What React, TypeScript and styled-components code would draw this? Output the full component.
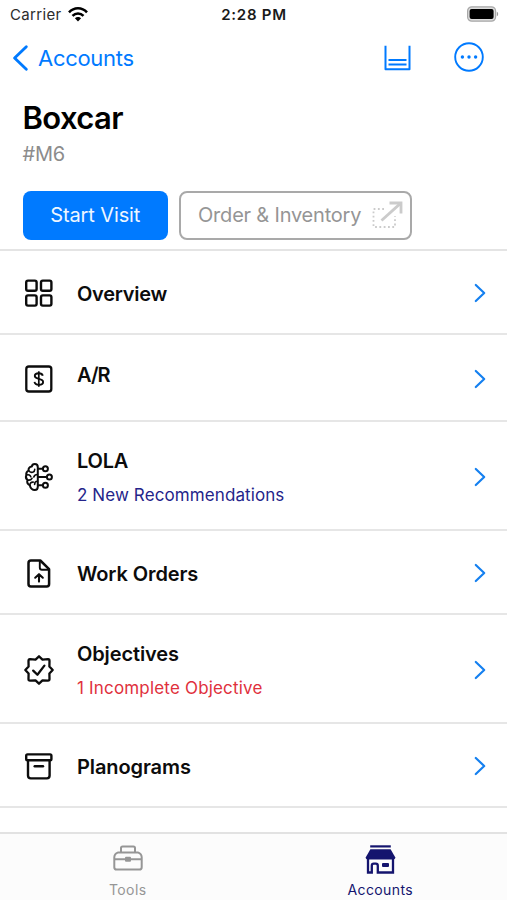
import React from "react";
import styled, { createGlobalStyle } from "styled-components";

const BLUE = "#007aff";
const NAVY = "#14146e";

const GlobalStyle = createGlobalStyle`
  * { box-sizing: border-box; }
  body { margin: 0; background: #fff; }
  svg { display: block; flex: none; overflow: visible; }
`;

const Screen = styled.div`
  width: 507px;
  height: 900px;
  display: flex;
  flex-direction: column;
  overflow: hidden;
  background: #fff;
  color: #0c0c0c;
  font-family: Inter, "Liberation Sans", sans-serif;
`;

const StatusBar = styled.div`
  height: 30px;
  flex: none;
  display: grid;
  grid-template-columns: 1fr auto 1fr;
  align-items: center;
  padding: 0 9px 0 10px;
`;

const Carrier = styled.div`
  display: flex;
  align-items: center;
  gap: 6px;
  font-size: 15px;
  line-height: 20px;
  letter-spacing: 0.35px;
  color: #2c2c2c;

  svg {
    margin-bottom: 2px;
  }
`;

const Clock = styled.div`
  font-size: 15px;
  line-height: 20px;
  font-weight: 600;
  letter-spacing: 0.75px;
  color: #1a1a1a;
`;

const BatterySlot = styled.div`
  justify-self: end;
  padding-bottom: 2px;
`;

const NavBar = styled.nav`
  height: 56px;
  flex: none;
  display: flex;
  align-items: center;
  padding: 0 23px 0 13px;
`;

const BackButton = styled.button`
  display: flex;
  align-items: center;
  gap: 10px;
  border: 0;
  padding: 0;
  background: none;
  color: ${BLUE};
  font: 400 22px/28px Inter, "Liberation Sans", sans-serif;
  letter-spacing: -0.3px;
  margin-right: auto;
`;

const NavActions = styled.div`
  display: flex;
  align-items: center;
  gap: 43px;
  padding-bottom: 2px;
  color: ${BLUE};
`;

const AccountHeader = styled.header`
  height: 165px;
  flex: none;
  padding: 12px 22px 0 22.5px;
  border-bottom: 2px solid #e4e4e4;
`;

const Title = styled.h1`
  margin: 0;
  font-size: 31px;
  line-height: 40px;
  font-weight: 600;
  letter-spacing: -0.6px;
  color: #000;
`;

const AccountId = styled.div`
  margin-top: 3px;
  font-size: 20px;
  line-height: 26px;
  letter-spacing: -0.2px;
  color: #8c8c8c;
`;

const Actions = styled.div`
  display: flex;
  gap: 11px;
  margin-top: 24px;
`;

const ActionButton = styled.button<{ $primary?: boolean }>`
  width: ${(p) => (p.$primary ? 145.5 : 232.5)}px;
  height: 48.5px;
  display: flex;
  align-items: center;
  justify-content: ${(p) => (p.$primary ? "center" : "flex-start")};
  gap: 11px;
  padding: ${(p) => (p.$primary ? "0" : "0 0 0 17px")};
  border: ${(p) => (p.$primary ? "0" : "2px solid #a9a9a9")};
  border-radius: 8px;
  background: ${(p) => (p.$primary ? BLUE : "#fff")};
  color: ${(p) => (p.$primary ? "#eef6ff" : "#959595")};
  font: 400 20px/26px Inter, "Liberation Sans", sans-serif;
  letter-spacing: ${(p) => (p.$primary ? -0.12 : -0.2)}px;
  white-space: nowrap;
`;

const List = styled.main`
  flex: 1;
  min-height: 0;
`;

const Row = styled.div<{ $height: number }>`
  height: ${(p) => p.$height}px;
  display: flex;
  align-items: center;
  padding: 2px 21px 0 23px;
  border-bottom: 2px solid #e6e6e6;
`;

const IconSlot = styled.div`
  width: 31px;
  display: flex;
  justify-content: center;
  color: #0c0c0c;
`;

const RowText = styled.div<{ $lift: number }>`
  flex: 1;
  margin-left: 23px;
  padding-top: 1px;
  padding-bottom: ${(p) => p.$lift}px;
`;

const RowTitle = styled.div<{ $tracking: number }>`
  font-size: 20px;
  line-height: 26px;
  font-weight: 600;
  letter-spacing: ${(p) => p.$tracking}px;
`;

const RowNote = styled.div<{ $color: string; $tracking: number }>`
  margin-top: 10px;
  font-size: 17px;
  line-height: 22px;
  letter-spacing: ${(p) => p.$tracking}px;
  color: ${(p) => p.$color};
`;

const TabBar = styled.footer`
  height: 68px;
  flex: none;
  display: grid;
  grid-template-columns: 1fr 1fr;
  border-top: 2px solid #e2e2e2;
  background: #fcfcfc;
`;

const Tab = styled.div<{ $active?: boolean }>`
  display: flex;
  flex-direction: column;
  align-items: center;
  justify-content: flex-end;
  padding-bottom: 1px;
  padding-left: ${(p) => (p.$active ? 0 : 2)}px;
  gap: ${(p) => (p.$active ? 7 : 10)}px;
  font-size: 14px;
  line-height: 18px;
  letter-spacing: 0.4px;
  color: ${(p) => (p.$active ? NAVY : "#969696")};
`;

const WifiIcon = () => (
  <svg width="20" height="15" viewBox="0 0 20 15" fill="none" stroke="#000" strokeWidth="2.5">
    <path d="M1 5.4C6-.1 14-.1 19 5.4" />
    <path d="M4.5 8.9C7.6 5.6 12.4 5.6 15.5 8.9" />
    <path d="M6.9 11.3C8.7 9.4 11.3 9.4 13.1 11.3L10 14.5Z" fill="#000" stroke="none" />
  </svg>
);

const BatteryIcon = () => (
  <svg width="32" height="16" viewBox="0 0 32 16">
    <rect x="1.6" y="0.8" width="28" height="14.4" rx="4.2" fill="#dcdcdc" stroke="#a8a8a8" strokeWidth="1.2" />
    <rect x="3.6" y="2.9" width="24" height="10.2" rx="2" fill="#000" />
    <path d="M30.8 5.7Q32.2 6.1 32.2 8T30.8 10.3Z" fill="#999" />
  </svg>
);

const BackIcon = () => (
  <svg width="15" height="26" viewBox="0 0 15 26" fill="none" stroke="currentColor" strokeWidth="2.9" strokeLinecap="round" strokeLinejoin="round">
    <path d="M13.3 1.8L1.6 13L13.3 24.2" />
  </svg>
);

const TrayIcon = () => (
  <svg width="27" height="26" viewBox="0 0 27 26" fill="none" stroke="currentColor" strokeWidth="2" strokeLinejoin="round">
    <path d="M1.5 1.8V25.3H25.5V1.8" />
    <path d="M4.5 16.1H22.5M4.5 20.6H22.5" />
  </svg>
);

const MoreIcon = () => (
  <svg width="30" height="30" viewBox="0 0 30 30" fill="none" stroke="currentColor" strokeWidth="1.9">
    <circle cx="15" cy="15" r="13.8" />
    <g fill="currentColor" stroke="none">
      <circle cx="8.4" cy="15" r="1.7" />
      <circle cx="15" cy="15" r="1.7" />
      <circle cx="21.6" cy="15" r="1.7" />
    </g>
  </svg>
);

const ExpandIcon = () => (
  <svg width="32" height="28" viewBox="0 0 32 28" fill="none" stroke="#cbcbcb">
    <path d="M12 8H1.5V26H23V15" strokeWidth="1.8" strokeDasharray="1.8 2.5" />
    <path d="M9.5 19.5L28.5 2.4" strokeWidth="2.8" />
    <path d="M17.5 2H29V12.5" strokeWidth="2.8" />
  </svg>
);

const ChevronIcon = () => (
  <svg width="11" height="18" viewBox="0 0 11 18" fill="none" stroke="#1580f0" strokeWidth="2.2" strokeLinecap="round" strokeLinejoin="round">
    <path d="M0.8 1L9.2 9L0.8 17" />
  </svg>
);

const OverviewIcon = () => (
  <svg width="28" height="28" viewBox="0 0 28 28" fill="none" stroke="currentColor" strokeWidth="2.4">
    <rect x="1.2" y="1.6" width="10.4" height="10.2" rx="1.8" />
    <rect x="16" y="1.6" width="10.4" height="10.2" rx="1.8" />
    <rect x="1.2" y="16.4" width="10.4" height="10.2" rx="1.8" />
    <rect x="16" y="16.4" width="10.4" height="10.2" rx="1.8" />
  </svg>
);

const MoneyIcon = () => (
  <svg width="28" height="28" viewBox="0 0 28 28" fill="none" stroke="currentColor" strokeWidth="2.3">
    <rect x="1.3" y="1.5" width="25" height="25" rx="2.6" />
    <path d="M17.8 10.8C17.3 9 15.8 8.3 13.8 8.3C11.4 8.3 9.8 9.3 9.8 11.1C9.8 15 18.1 12.8 18.1 16.9C18.1 18.8 16.3 19.7 13.9 19.7C11.5 19.7 9.8 18.8 9.5 16.9" strokeWidth="1.9" />
    <path d="M13.8 6.3V21.8" strokeWidth="1.7" />
  </svg>
);

const BrainIcon = () => (
  <svg width="28" height="28" viewBox="0 0 28 28" fill="none" stroke="currentColor" strokeWidth="2" strokeLinecap="round" strokeLinejoin="round">
    <path d="M12.8 4.2C12.8 1.9 11.5 1 9.8 1C8.2 1 7 2 6.8 3.6C4.5 3.8 3.2 5.5 3.6 7.5C1.8 8.5 1 10.2 1.3 12C.6 13.8 1 15.8 2.4 17C1.9 19.2 2.6 21.3 4.8 22.3C5.3 25 7.5 27 9.8 27C11.8 27 12.8 25.8 12.8 23.8Z" />
    <path d="M3.7 7.6C4.5 9 6 9.6 7.8 9.2C9 8.9 9.7 8 9.7 6.4M1.6 12C3.7 11.3 5.3 12.2 5.8 13.8M12.4 11.5C10.6 11.6 9.3 12.4 8.8 14M2.6 17C4.5 17.4 6.2 16.8 7 15.3M5 22.1C4.8 20.3 6 18.9 8.2 19.1M12.4 18.3C10.6 18.3 9.6 19.6 9.6 21.4" strokeWidth="1.6" />
    <path d="M13 5.8H17.6M13 14H21.2M13 22.2H17.6" strokeWidth="2" />
    <circle cx="20.4" cy="5.8" r="2.5" />
    <circle cx="24.4" cy="14" r="2.5" />
    <circle cx="20.4" cy="22.2" r="2.5" />
  </svg>
);

const FileIcon = () => (
  <svg width="24" height="29" viewBox="0 0 24 29" fill="none" stroke="currentColor" strokeWidth="2.5" strokeLinecap="round" strokeLinejoin="round">
    <path d="M13.3 1.5H4Q1.5 1.5 1.5 4V25Q1.5 27.5 4 27.5H19.6Q22.1 27.5 22.1 25V10.2Z" />
    <path d="M12.8 2V8.5Q12.8 10.8 15 10.8H21.6" strokeWidth="1.9" />
    <path d="M12 22.6V15.8M8.2 18.7L12 15.2L15.8 18.7" strokeWidth="2.1" />
  </svg>
);

const BadgeIcon = () => (
  <svg width="30" height="30" viewBox="0 0 30 30" fill="none" stroke="currentColor" strokeWidth="2.3" strokeLinecap="round" strokeLinejoin="round">
    <path d="M15 1.3L18.5 4.6L24 4.2Q25.6 4.3 25.5 6L25.4 11.5L28.7 15L25.4 18.5L25.5 24Q25.5 25.6 24 25.6L18.5 25.4L15 28.7L11.5 25.4L6 25.6Q4.4 25.6 4.5 24L4.6 18.5L1.3 15L4.6 11.5L4.5 6Q4.5 4.3 6 4.2L11.5 4.6Z" />
    <path d="M9.2 15.6L13.4 19.7L20.4 10.6" />
  </svg>
);

const ArchiveIcon = () => (
  <svg width="28" height="27" viewBox="0 0 28 27" fill="none" stroke="currentColor" strokeWidth="2.4" strokeLinecap="round" strokeLinejoin="round">
    <rect x="1.2" y="1.4" width="25.2" height="5.8" rx="1.3" />
    <path d="M3 7.5V22.6Q3 25.4 5.8 25.4H21.8Q24.6 25.4 24.6 22.6V7.5" />
    <path d="M9.7 13.3H18" />
  </svg>
);

const ToolboxIcon = () => (
  <svg width="30" height="26" viewBox="0 0 30 26" fill="none" stroke="currentColor" strokeWidth="2" strokeLinejoin="round">
    <path d="M5.2 7.4H24.8Q28.7 8.8 28.7 12.3V22.2Q28.7 24.6 26.3 24.6H3.7Q1.3 24.6 1.3 22.2V12.3Q1.3 8.8 5.2 7.4Z" />
    <path d="M8 7.2V3Q8 1.4 9.6 1.4H20.4Q22 1.4 22 3V7.2M1.5 14.2H12M18 14.2H28.5" />
    <rect x="12" y="11.8" width="6" height="5" rx="1" fill="currentColor" stroke="none" />
  </svg>
);

const StoreIcon = () => (
  <svg width="31" height="29" viewBox="0 0 31 29" fill="none" stroke="currentColor" strokeWidth="2.3">
    <path d="M5.2 1.4H25.8" strokeWidth="2.2" />
    <path d="M5.4 4.3H25.6L30.5 12.8Q30 14.5 28.3 14.5H2.7Q1 14.5 .5 12.8Z" fill="currentColor" stroke="none" />
    <path d="M3 14V27.5H6.8V20.7Q6.8 18.7 8.8 18.7H10.8Q12.8 18.7 12.8 20.7V27.5H28V14" />
    <rect x="17" y="18" width="7" height="4" rx="1" fill="currentColor" stroke="none" />
  </svg>
);

type Note = { text: string; color: string; tracking: number };
type Item = {
  title: string;
  icon: React.ReactNode;
  height: number;
  lift?: number;
  tracking?: number;
  note?: Note;
};

const items: Item[] = [
  { title: "Overview", icon: <OverviewIcon />, height: 84, tracking: -0.25 },
  { title: "A/R", icon: <MoneyIcon />, height: 87, lift: 9, tracking: -0.9 },
  {
    title: "LOLA",
    icon: <BrainIcon />,
    height: 109,
    tracking: -0.2,
    note: { text: "2 New Recommendations", color: "#24248a", tracking: 0.1 },
  },
  { title: "Work Orders", icon: <FileIcon />, height: 84, tracking: -0.1 },
  {
    title: "Objectives",
    icon: <BadgeIcon />,
    height: 109,
    tracking: -0.12,
    note: { text: "1 Incomplete Objective", color: "#e0303c", tracking: 0.18 },
  },
  { title: "Planograms", icon: <ArchiveIcon />, height: 84, tracking: -0.1 },
];

export default function App() {
  return (
    <Screen>
      <GlobalStyle />
      <StatusBar>
        <Carrier>
          Carrier
          <WifiIcon />
        </Carrier>
        <Clock>2:28 PM</Clock>
        <BatterySlot>
          <BatteryIcon />
        </BatterySlot>
      </StatusBar>
      <NavBar>
        <BackButton>
          <BackIcon />
          Accounts
        </BackButton>
        <NavActions>
          <TrayIcon />
          <MoreIcon />
        </NavActions>
      </NavBar>
      <AccountHeader>
        <Title>Boxcar</Title>
        <AccountId>#M6</AccountId>
        <Actions>
          <ActionButton $primary>Start Visit</ActionButton>
          <ActionButton>
            Order &amp; Inventory
            <ExpandIcon />
          </ActionButton>
        </Actions>
      </AccountHeader>
      <List>
        {items.map((item) => (
          <Row key={item.title} $height={item.height}>
            <IconSlot>{item.icon}</IconSlot>
            <RowText $lift={item.lift ?? 0}>
              <RowTitle $tracking={item.tracking ?? 0}>{item.title}</RowTitle>
              {item.note && (
                <RowNote $color={item.note.color} $tracking={item.note.tracking}>
                  {item.note.text}
                </RowNote>
              )}
            </RowText>
            <ChevronIcon />
          </Row>
        ))}
      </List>
      <TabBar>
        <Tab>
          <ToolboxIcon />
          Tools
        </Tab>
        <Tab $active>
          <StoreIcon />
          Accounts
        </Tab>
      </TabBar>
    </Screen>
  );
}
